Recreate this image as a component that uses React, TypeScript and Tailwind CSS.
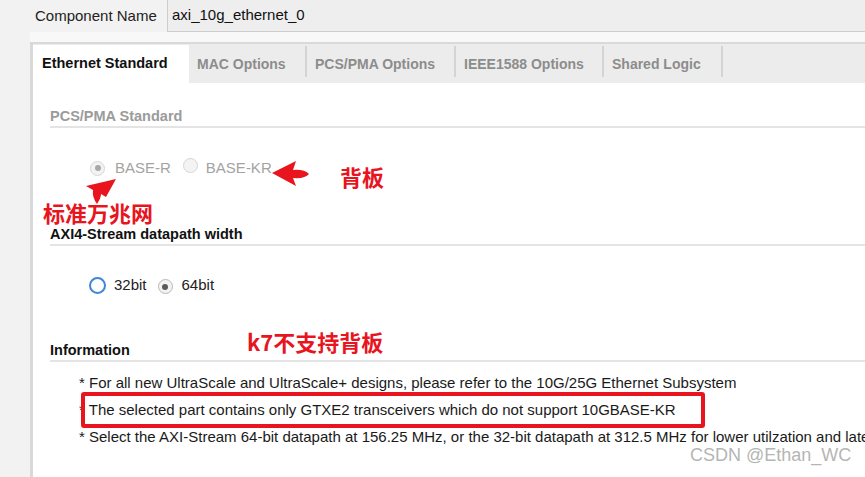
import React from 'react';

// Radio used by the Vivado-style IP dialog
type RadioKind = 'disabledOn' | 'disabledOff' | 'focus' | 'on';

const Radio: React.FC<{ kind: RadioKind }> = ({ kind }) => {
  if (kind === 'focus') {
    return <span className="inline-block w-[17px] h-[17px] rounded-full border-2 border-[#3f86d9] bg-white" />;
  }
  const border = kind === 'on' ? 'border-[#b9b9b9]' : 'border-[#d6d6d6]';
  const dot = kind === 'on' ? 'bg-[#5a5a5a]' : 'bg-[#a8a8a8]';
  return (
    <span className={`inline-flex items-center justify-center w-[15px] h-[15px] rounded-full border ${border} bg-[#f3f3f3]`}>
      {kind !== 'disabledOff' && <span className={`w-[6px] h-[6px] rounded-full ${dot}`} />}
    </span>
  );
};

const SectionHeader: React.FC<{ label: string; muted?: boolean; className?: string }> = ({ label, muted, className }) => (
  <div
    className={`h-[22px] leading-[20px] border-b-2 border-[#e4e4e4] text-[14.5px] font-bold ${
      muted ? 'text-[#9b9b9b]' : 'text-[#111]'
    } ${className ?? ''}`}
  >
    {label}
  </div>
);

const tabs = [
  { label: 'MAC Options', w: 'w-[118px]' },
  { label: 'PCS/PMA Options', w: 'w-[149px]' },
  { label: 'IEEE1588 Options', w: 'w-[148px]' },
  { label: 'Shared Logic', w: 'w-[119px]' },
];

const cjk = { fontFamily: '"Noto Sans CJK SC", "Liberation Sans", sans-serif' };

export default function App() {
  return (
    <div
      className="relative w-[865px] h-[477px] overflow-hidden bg-[#f2f2f2] text-[#1a1a1a]"
      style={{ fontFamily: '"Liberation Sans", Arial, sans-serif' }}
    >
      {/* Component name row */}
      <div className="flex items-center h-[32px]">
        <span className="pl-[35px] w-[167px] text-[15px] text-[#222] whitespace-nowrap">Component Name</span>
        <div className="flex-1 h-[33px] -mt-[1px] -mr-[4px] border border-[#cdcdcd] bg-[#eeeeee] flex items-center pl-[4px] text-[15px] text-[#111]">
          axi_10g_ethernet_0
        </div>
      </div>

      <div className="h-[10px] ml-[30px] bg-[#f8f8f8]" />

      {/* Tabbed panel */}
      <div className="ml-[30px] w-[900px] border-l-[3px] border-t-2 border-[#d9d9d9] bg-white">
        <div className="flex h-[39px] bg-[#ececec] pt-[1px]">
          <div className="w-[156px] h-[38px] bg-white flex items-center pl-[9px] text-[14.5px] font-bold text-[#111]">
            Ethernet Standard
          </div>
          {tabs.map((t) => (
            <div key={t.label} className={`flex items-center justify-between h-[38px] pl-[8px] ${t.w}`}>
              <span className="text-[14px] font-bold text-[#8c8c8c] whitespace-nowrap">{t.label}</span>
              <span className="w-[2px] h-[31px] -mt-[6px] bg-[#d4d4d4]" />
            </div>
          ))}
        </div>

        <div className="pl-[17px] pb-[40px]">
          <SectionHeader label="PCS/PMA Standard" muted className="mt-[23px]" />
          <div className="mt-[30px] h-[20px] flex items-center pl-[40px] text-[15px] text-[#a3a3a3]">
            <Radio kind="disabledOn" />
            <span className="ml-[10px]">BASE-R</span>
            <span className="ml-[12px]"><Radio kind="disabledOff" /></span>
            <span className="ml-[8px]">BASE-KR</span>
          </div>

          <SectionHeader label="AXI4-Stream datapath width" className="mt-[46px]" />
          <div className="mt-[29px] h-[20px] flex items-center pl-[39px] text-[15px] text-[#222]">
            <Radio kind="focus" />
            <span className="ml-[8px]">32bit</span>
            <span className="ml-[11px]"><Radio kind="on" /></span>
            <span className="ml-[9px]">64bit</span>
          </div>

          <SectionHeader label="Information" className="mt-[45px]" />
          <div className="mt-[7px] pl-[29px] text-[15px] leading-[27px] text-[#1a1a1a] whitespace-nowrap">
            <div>* For all new UltraScale and UltraScale+ designs, please refer to the 10G/25G Ethernet Subsystem</div>
            <div>* The selected part contains only GTXE2 transceivers which do not support 10GBASE-KR</div>
            <div>* Select the AXI-Stream 64-bit datapath at 156.25 MHz, or the 32-bit datapath at 312.5 MHz for lower utilzation and latency</div>
          </div>
        </div>
      </div>

      {/* Annotations drawn over the screenshot */}
      <div className="absolute left-[81px] top-[392px] w-[624px] h-[36px] border-4 border-[#e8141e] rounded-[3px]" />

      <svg className="absolute left-0 top-0" width="865" height="477" viewBox="0 0 865 477">
        {/* arrow to BASE-KR */}
        <path
          d="M272 173 L296 161 L293 170 Q304 169 309 174 Q305 179 293 178 L296 186 Z"
          fill="#e8141e"
        />
        {/* arrow to BASE-R */}
        <path
          d="M116 179 L86 186 L93 190 Q92 197 97 204 Q101 198 101 194 L106 197 Z"
          fill="#e8141e"
        />
      </svg>

      <span className="absolute left-[340px] top-[165px] text-[22px] font-bold text-[#e8141e] leading-none" style={cjk}>
        背板
      </span>
      <span className="absolute left-[43px] top-[201px] text-[22px] font-bold text-[#e8141e] leading-none" style={cjk}>
        标准万兆网
      </span>
      <span className="absolute left-[247px] top-[330px] text-[22px] font-bold text-[#e8141e] leading-none" style={cjk}>
        k7不支持背板
      </span>

      <span className="absolute left-[690px] top-[446px] text-[18px] text-[#b5b5b5] leading-none">CSDN @Ethan_WC</span>
    </div>
  );
}
